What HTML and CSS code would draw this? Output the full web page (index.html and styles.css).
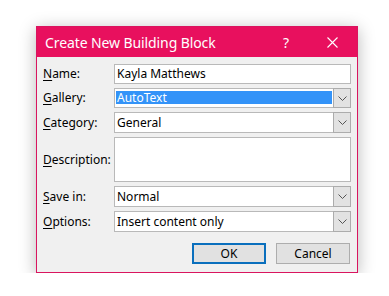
FILE: index.html
```html
<!DOCTYPE html>
<html>
<head>
<meta charset="utf-8">
<link rel="stylesheet" href="styles.css">
</head>
<body>
<div class="dialog">
  <div class="titlebar">
    <span class="title">Create New Building Block</span>
    <span class="help">?</span>
    <span class="close"><svg width="11" height="11" viewBox="0 0 11 11"><path d="M0.5 0.5 L10.5 10.5 M10.5 0.5 L0.5 10.5" stroke="#fff" stroke-width="1.1" fill="none"/></svg></span>
  </div>
  <div class="content">
    <div class="form">
      <label class="lbl"><u>N</u>ame:</label>
      <div class="field text"><span class="val">Kayla Matthews</span></div>

      <label class="lbl"><u>G</u>allery:</label>
      <div class="field combo"><span class="val sel">AutoText</span><span class="drop"><svg width="9" height="5" viewBox="0 0 9 5"><path d="M0.5 0.5 L4.5 4.5 L8.5 0.5" stroke="#555" stroke-width="1" fill="none"/></svg></span></div>

      <label class="lbl"><u>C</u>ategory:</label>
      <div class="field combo r21"><span class="val">General</span><span class="drop"><svg width="9" height="5" viewBox="0 0 9 5"><path d="M0.5 0.5 L4.5 4.5 L8.5 0.5" stroke="#555" stroke-width="1" fill="none"/></svg></span></div>

      <label class="lbl"><u>D</u>escription:</label>
      <div class="field text desc"></div>

      <label class="lbl"><u>S</u>ave in:</label>
      <div class="field combo r21"><span class="val">Normal</span><span class="drop"><svg width="9" height="5" viewBox="0 0 9 5"><path d="M0.5 0.5 L4.5 4.5 L8.5 0.5" stroke="#555" stroke-width="1" fill="none"/></svg></span></div>

      <label class="lbl"><u>O</u>ptions:</label>
      <div class="field combo r21"><span class="val">Insert content only</span><span class="drop"><svg width="9" height="5" viewBox="0 0 9 5"><path d="M0.5 0.5 L4.5 4.5 L8.5 0.5" stroke="#555" stroke-width="1" fill="none"/></svg></span></div>
    </div>
    <div class="buttons">
      <button class="btn default">OK</button>
      <button class="btn">Cancel</button>
    </div>
  </div>
</div>
</body>
</html>
```

FILE: styles.css
```css
html, body {
  margin: 0;
  padding: 0;
  background: #ffffff;
}
body {
  padding: 26px 0 0 36px;
  font-family: "Noto Sans", "Open Sans", sans-serif;
  font-size: 12px;
  color: #000;
}
.dialog {
  width: 320px;
  border: 1px solid #d9155f;
  background: #f0f0f0;
  box-shadow: 0 3px 16px rgba(0, 0, 0, 0.28);
}
.titlebar {
  height: 30px;
  background: #e8105e;
  color: #fff;
  display: flex;
  align-items: center;
  font-size: 14px;
}
.title {
  padding-left: 8px;
  flex: 1;
  letter-spacing: -0.1px;
}
.help {
  width: 8px;
  margin-right: 36px;
  font-size: 14px;
}
.close {
  display: flex;
  margin-right: 19px;
}
.content {
  padding: 7px 6px 8px 6px;
}
.form {
  display: grid;
  grid-template-columns: 71px 237px;
  grid-auto-rows: auto;
  row-gap: 4px;
  align-items: center;
}
.lbl {
  line-height: 16px;
}
.lbl u {
  text-decoration-thickness: 1px;
  text-underline-offset: 2px;
}
.field {
  box-sizing: border-box;
  height: 20px;
  background: #fff;
  border: 1px solid #b9b9b9;
  display: flex;
  align-items: center;
  position: relative;
}
.field.r21 {
  height: 21px;
}
.field.desc {
  height: 45px;
}
.val {
  padding-left: 2px;
  line-height: 16px;
  white-space: nowrap;
}
.combo .val {
  flex: 1;
}
.val.sel {
  background: #3393f8;
  color: #fff;
  margin: 0 1px 0 1px;
  padding-left: 1px;
  line-height: 14px;
  height: 13px;
  align-self: flex-start;
  margin-top: 2px;
}
.drop {
  box-sizing: border-box;
  width: 18px;
  align-self: stretch;
  margin: -1px -1px -1px 0;
  background: #e2e2e2;
  border: 1px solid #acacac;
  display: flex;
  align-items: center;
  justify-content: center;
}
.buttons {
  display: flex;
  justify-content: flex-end;
  gap: 10px;
  margin-top: 11px;
  padding-right: 1px;
}
.btn {
  box-sizing: border-box;
  width: 74px;
  height: 21px;
  background: #e1e1e1;
  border: 1px solid #adadad;
  font-family: "Noto Sans", "Open Sans", sans-serif;
  font-size: 12px;
  color: #000;
  padding: 0;
  line-height: 16px;
}
.btn.default {
  border: 2px solid #0a6fbd;
}
```
